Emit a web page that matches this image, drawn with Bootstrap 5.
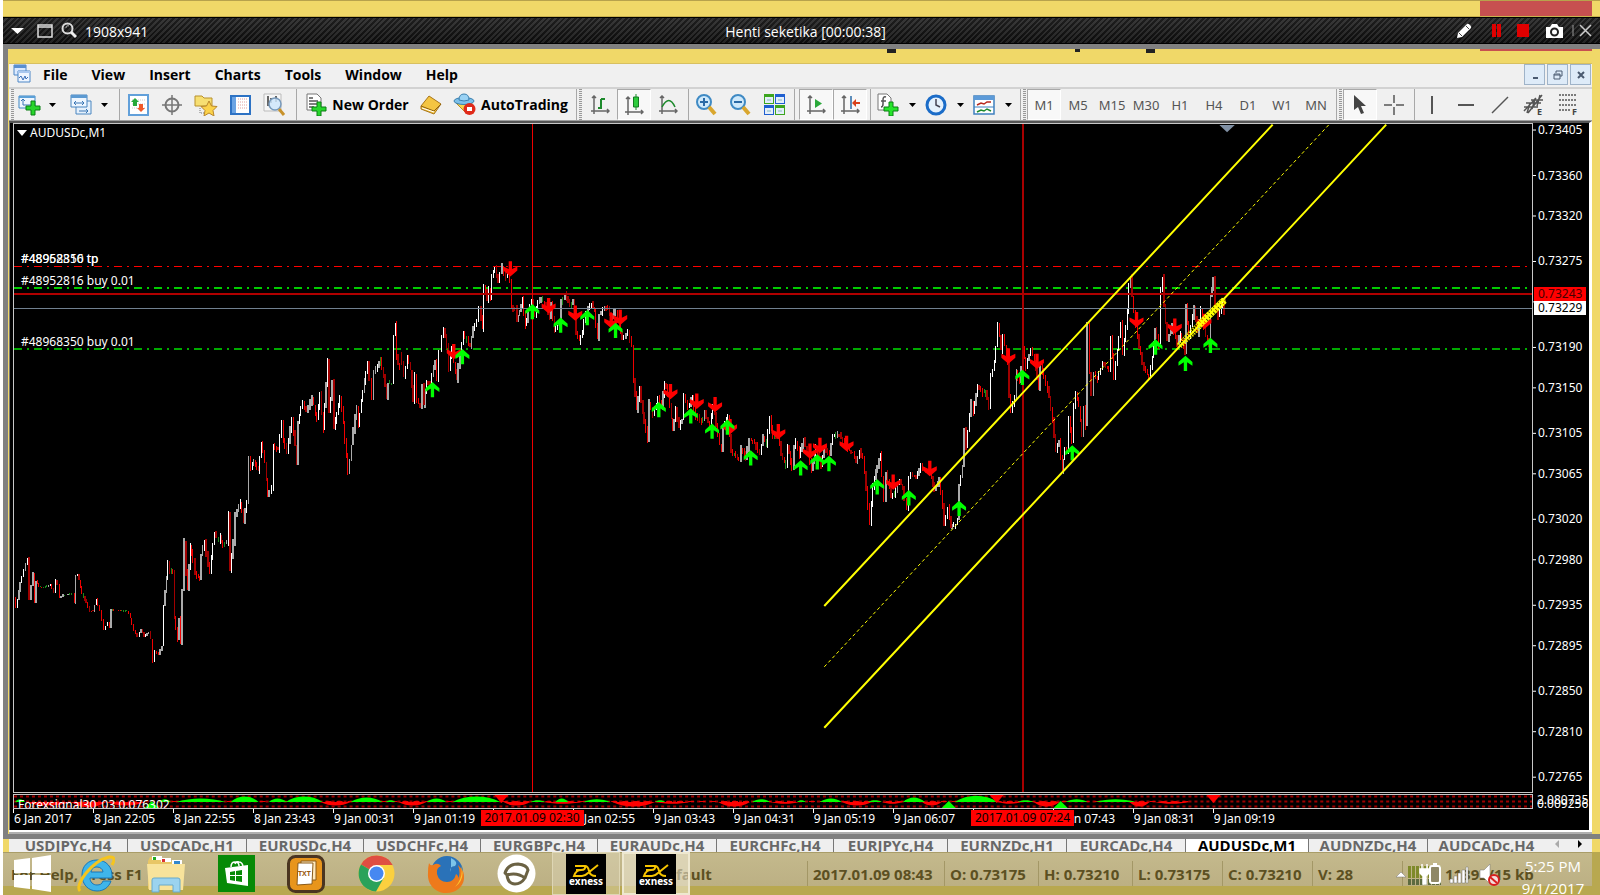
<!DOCTYPE html>
<html lang="en">
<head>
<meta charset="utf-8">
<meta name="viewport" content="width=device-width, initial-scale=1">
<title>AUDUSDc,M1</title>
<link href="https://cdn.jsdelivr.net/npm/bootstrap@5.3.0/dist/css/bootstrap.min.css" rel="stylesheet">
<style>
body{font-family:"Open Sans","Noto Sans",sans-serif;font-size:14px;line-height:18px;color:#000;background:#fff;padding-left:3px;overflow:hidden}
button{font-family:inherit}
.bare{border:0;background:none;padding:0;color:inherit;display:flex;align-items:center;justify-content:center;flex:none}
.desk-strip{height:17px;background:#f0d868;border-top:1px solid #b7a24c;border-bottom:1px solid #c9b24e;padding-right:8px}
.red-tab{width:112px;background:#c75050}
.rec{height:27px;color:#fff;background:repeating-linear-gradient(135deg,rgba(0,0,0,.4) 0 2px,rgba(70,70,70,.3) 2px 4px),linear-gradient(#333,#141414);border-top:1px solid #000;border-bottom:1px solid #000}
.rec span,.rec-title{padding-top:2px}
.rec-side{flex:1 1 0}
.frame{border:solid #808080;border-width:5px 0 5px 5px;background:#f0d868;min-height:0}
.cap{height:14px;padding-right:8px}
.cap i{height:4px;width:9px;background:#222;margin-right:179px}
.cap i+i{width:5px;height:3px;margin-right:66px}
.cap i+i+i{width:9px;height:4px;margin-right:325px}
.cap .red-tab{height:2px}
.app{margin:0 8px 0 1px;min-height:0;border-top:1px solid #d8c060}
.menu-row{height:25px;background:#f0f0f0;border-bottom:2px solid #d2d2d2;padding:0 1px 0 4px;font-weight:700}
.menu-row a{color:#000;text-decoration:none;padding:0 12px;line-height:22px}
.wbtn{width:21px;height:21px;border:1px solid #9fb3c8;background:#deebf8;color:#4a5a70;margin-left:2px}
.tools{height:32px;background:#f0f0f0;border-bottom:1px solid #a0a0a0}
.tools .bare{width:34px}
.tools .caret{width:14px}
.tools .w28{width:28px}.tools .w18{width:18px}.tools .w32{width:32px}
.tools .wide{width:113px;gap:5px;font-weight:700}
.tools .auto{width:125px}
.tools .on{background:#f8f8f8;border:1px solid #a8a8a8;border-right-color:#fff;border-bottom-color:#fff}
.tf{font-family:"Noto Sans",sans-serif;font-size:13px;color:#555!important}
.sep{flex:none;width:4px;border-right:1px solid #a8a8a8}
.sep.w9{width:9px;margin-right:1px}.sep.w6{width:6px}
.grip{flex:none;width:6px;border-left:2px solid #f0f0f0;border-right:1px solid #f0f0f0;background:repeating-linear-gradient(#999 0 1px,#eee 1px 2px)}
.caret svg{display:block}
.chart{background:#000;border:solid #bbb;border-width:0 3px 0 1px;border-left-color:#777;border-right-color:#fff;border-top:2px solid #555;padding:0 0 0 3px;min-height:0;font:12px/16px "Noto Sans",sans-serif;color:#fff}
.chart-end{height:4px;background:#b0b0b0;border-top:2px solid #fff}
.plot{border:1px solid #c8c8c8;min-width:0}
.axis{width:56px;flex:none}
.plot svg.fill,.axis svg,.sub svg{position:absolute;inset:0;width:100%;height:100%;display:block}
.note{position:absolute;left:7px;white-space:nowrap;transform:translateY(-50%)}
.sub{height:15px;border:solid #c8c8c8;border-width:1px;overflow:hidden}
.subrow{margin-top:1px}
.subrow .axis{font-size:12px;line-height:12px}
.times{height:21px}
.times span{flex:0 0 5.263%;white-space:nowrap;border-left:1px solid #fff;height:4px;padding-top:2px}
.stamp{position:absolute;top:1px;height:16px;width:103px;background:#f00;color:#000;text-align:center;line-height:16px;white-space:nowrap}
.tag{position:absolute;left:1px;width:52px;height:14px;line-height:14px;padding-left:4px}
.tabs{height:13px;background:#f0d868;padding:0 8px 0 6px;flex:none;font-size:15px;font-weight:700;overflow:hidden}
.tabs>div{background:#efefef;min-width:0}
.tabs a{flex:0 0 117px;text-align:center;color:#686868;text-decoration:none;line-height:12px;border-right:1px solid #777;height:13px;white-space:nowrap}
.tabs a.t120{flex-basis:119px}.tabs a.t114{flex-basis:114px}
.tabs a.on{background:#fff;color:#000;flex-basis:123px}
.task{height:43px;background:#b8a850;flex:none}
.status{height:34px;margin-right:8px;background:linear-gradient(#c4b98c,#bcb084);border-top:1px solid #a99d68;color:#5c5022;font-size:15px;font-weight:700;white-space:nowrap}
.status span{height:25px;margin-top:8px;line-height:26px;border-left:1px solid #a39766;padding-left:5px;flex:none}
.s94{width:94px}.s90{width:90px}
.apps{position:absolute;inset:0 auto 0 0}
.apps .bare{width:70px;height:43px}
.apps .st{width:58px}
.apps .win{border:1px solid #ded6b4;background:rgba(225,218,190,.4);width:68px;margin:0 1px}
.apps .act{background:rgba(240,235,215,.55);border:2px solid #eee8d0}
.tray{position:absolute;right:14px;top:0;bottom:0;color:#fff}
.clock{text-align:center;line-height:22px;padding-top:3px;width:66px;font-size:15px}
</style>
</head>
<body class="d-flex flex-column vh-100">
<div class="desk-strip d-flex justify-content-end flex-shrink-0"><div class="red-tab"></div></div>

<header class="rec d-flex align-items-center flex-shrink-0">
 <div class="rec-side d-flex align-items-center">
  <button class="bare ms-2" aria-label="Menu"><svg width="14" height="8"><path d="M0 1h13L6.500 7z" fill="#fff"/></svg></button>
  <button class="bare ms-2 ps-1" aria-label="Region"><svg width="16" height="14"><path d="M1 1h14v12H1zM1 3h14" fill="none" stroke="#ddd" stroke-width="1.500"/></svg></button>
  <button class="bare ms-2" aria-label="Zoom"><svg width="16" height="17"><circle cx="6.500" cy="6.500" r="5" fill="none" stroke="#ddd" stroke-width="2"/><path d="M5 6a2 2 0 0 1 3-2" stroke="#aaa" fill="none"/><path d="M10 10l5 5" stroke="#eee" stroke-width="3"/></svg></button>
  <span class="ps-2">1908x941</span>
 </div>
 <div class="rec-title ps-3">Henti seketika [00:00:38]</div>
 <div class="rec-side d-flex align-items-center justify-content-end pe-2">
  <button class="bare me-3" aria-label="Draw"><svg width="16" height="16"><path d="M1 15l1-5 9-9q1-1 3 1t1 3l-9 9z" fill="#fff"/><path d="M10 3l3 3M3 10l3 3" stroke="#444"/></svg></button>
  <button class="bare ms-1 me-3" aria-label="Pause"><svg width="9" height="13"><path d="M0 0h4v13H0zM5 0h4v13H5z" fill="#e00000"/></svg></button>
  <button class="bare me-3" aria-label="Stop"><svg width="12" height="13"><path d="M0 0h12v13H0z" fill="#e00000"/></svg></button>
  <button class="bare me-2" aria-label="Photo"><svg width="19" height="14"><path d="M1 3h4l2-3h5l2 3h4v11H1z" fill="#fff"/><circle cx="9.500" cy="8" r="3.500" fill="none" stroke="#222" stroke-width="2"/></svg></button>
  <svg width="3" height="11"><path d="M1 0v11" stroke="#999"/></svg>
  <button class="bare ms-1" aria-label="Close"><svg width="13" height="13"><path d="M1 1l11 11M12 1L1 12" stroke="#ccc" stroke-width="1.500"/></svg></button>
 </div>
</header>

<main class="frame d-flex flex-column flex-grow-1">
 <div class="cap d-flex justify-content-end flex-shrink-0"><i></i><i></i><i></i><div class="red-tab"></div></div>
 <div class="app d-flex flex-column flex-grow-1">
  <nav class="menu-row d-flex flex-shrink-0">
   <svg width="18" height="19"><path d="M1 1h12v10H1z" fill="#dceaff" stroke="#4d86c6"/><path d="M1 1h12v3H1z" fill="#5b8fd0"/><path d="M5 7h12v11H5z" fill="#eef5ff" stroke="#4d86c6"/><path d="M5 7h12v2H5z" fill="#a9c7ee"/><path d="M6 14l2-2 2 4 2-4 1 3 2-2" stroke="#3b6fb8" fill="none"/></svg>
   <a href="#">File</a><a href="#">View</a><a href="#">Insert</a><a href="#">Charts</a><a href="#">Tools</a><a href="#">Window</a><a href="#">Help</a>
   <div class="ms-auto d-flex">
    <button class="bare wbtn" aria-label="Minimize"><svg width="10" height="10"><path d="M3 8h5" stroke="#4a5a70" stroke-width="2"/></svg></button><button class="bare wbtn" aria-label="Restore"><svg width="10" height="10"><path d="M3 1h6v5H7M3 1v2M1 4h6v5H1zM1 5h6" stroke="#4a5a70" fill="none"/></svg></button><button class="bare wbtn" aria-label="Close chart"><svg width="10" height="10"><path d="M2 2l6 6M8 2L2 8" stroke="#4a5a70" stroke-width="2"/></svg></button>
   </div>
  </nav>
  <div class="tools d-flex flex-shrink-0" role="toolbar">
   <div class="grip"></div>
   <button class="bare w28" aria-label="New chart"><svg width="23" height="22"><path d="M1 2h16v12H1z" fill="#eef6ff" stroke="#3f87c4"/><path d="M1 2h16v2H1z" fill="#5ba0d8"/><path d="M5 5v6h8M3 7l2-2 2 2" stroke="#3a76b4" fill="none"/><path d="M13 7h4v5h5v4h-5v5h-4v-5H8v-4h5z" fill="#27d52b" stroke="#0b7f14"/></svg></button>
   <button class="bare caret w18" aria-label="New chart list"><svg width="7" height="4"><path d="M0 0h7L3.500 4z"/></svg></button>
   <div class="ms-1"></div>
   <button class="bare w32" aria-label="Profiles"><svg width="22" height="22"><path d="M6 7h15v13H6z" fill="#e6f1fc" stroke="#4b86c0"/><path d="M1 1h16v12H1z" fill="#eef6ff" stroke="#4b86c0"/><path d="M1 1h16v3H1z" fill="#5c9ad2"/><path d="M4 9h10M6 7L4 9l2 2M12 7l2 2-2 2M9 17h9M16 15l2 2-2 2" stroke="#3a76b4" fill="none"/></svg></button>
   <button class="bare caret" aria-label="Profile list"><svg width="7" height="4"><path d="M0 0h7L3.500 4z"/></svg></button>
   <div class="sep w9"></div>
   <button class="bare" aria-label="Market watch"><svg width="21" height="22"><path d="M1 1h19v20H1z" fill="#fff" stroke="#62a0da" stroke-width="2"/><path d="M4 6h14M4 10h14M4 14h14" stroke="#ccc" stroke-dasharray="1 1"/><path d="M7 4l4 4H9v4H5V8H3z" fill="#26a83a"/><path d="M13 18l4-4h-2v-4h-4v4H9z" fill="#f0592a"/></svg></button>
   <button class="bare" aria-label="Data window"><svg width="20" height="20"><circle cx="10" cy="10" r="6.500" fill="none" stroke="#777" stroke-width="2"/><path d="M10 0v20M0 10h20" stroke="#777" stroke-width="1.500"/></svg></button>
   <button class="bare" aria-label="Navigator"><svg width="24" height="22"><path d="M1 2h7l2 2h8v8H1z" fill="#f7df72" stroke="#b8912c"/><path d="M6 14v5h5" stroke="#777" fill="none" stroke-dasharray="1 1"/><path d="M15 7l2.500 5 5.500.5-4 4 1 5.500-5-3-5 3 1-5.500-4-4 5.500-.5z" fill="#fbd24a" stroke="#b8862a"/></svg></button>
   <button class="bare" aria-label="Terminal"><svg width="21" height="20"><path d="M1 1h19v18H1z" fill="#fff" stroke="#2d72c4" stroke-width="2"/><path d="M2 2h4v16H2z" fill="#6ba4e4"/><path d="M8 4h10M8 7h10M8 10h10M8 13h10" stroke="#e0a0a0" stroke-dasharray="1 1"/></svg></button>
   <button class="bare" aria-label="Strategy tester"><svg width="23" height="23"><path d="M1 1h17v17H1z" fill="#f6f6f6" stroke="#bbb"/><path d="M5 3v10M8 5v5M13 3v6" stroke="#666" stroke-width="2"/><circle cx="12" cy="11" r="6" fill="#cfe6fb" fill-opacity=".85" stroke="#79b" stroke-width="1.500"/><path d="M16 16l5 6" stroke="#c8922b" stroke-width="3"/></svg></button>
   <div class="sep w6"></div><div class="me-1"></div>
   <button class="bare wide"><svg width="21" height="23"><path d="M1 1h10l4 4v12H1z" fill="#fff" stroke="#777"/><path d="M3 5h4M3 8h9M3 11h9M3 14h5" stroke="#555" stroke-width="1.500"/><path d="M11 9h4v5h5v4h-5v5h-4v-5H6v-4h5z" fill="#27d52b" stroke="#0b7f14"/></svg>New Order</button>
   <button class="bare" aria-label="MetaEditor"><svg width="22" height="20"><path d="M1 11L9 1l12 8-7 10-13-5z" fill="#f4c542" stroke="#a87518"/><path d="M1 11l13 5 7-7" fill="none" stroke="#8f6212"/><path d="M2 13l12 4" stroke="#fff"/></svg></button>
   <button class="bare wide auto"><svg width="23" height="23"><path d="M3 10h16l-5 11z" fill="#f7d34d" stroke="#b88e25"/><ellipse cx="11" cy="8" rx="10" ry="3.500" fill="#7cc0ea" stroke="#3a7fae"/><path d="M6 7q0-6 5-6t5 6q-5 2-10 0z" fill="#9ad2f4" stroke="#3a7fae"/><circle cx="16.500" cy="16" r="6" fill="#e02a1a"/><path d="M14 14h5v4h-5z" fill="#fff"/></svg>AutoTrading</button>
   <div class="sep"></div><div class="grip"></div>
   <button class="bare" aria-label="Bar chart"><svg width="20" height="20"><path d="M4 1v18M1 16h18M2 3l2-2 2 2M17 14l2 2-2 2" stroke="#666" fill="none" stroke-width="1.500"/><path d="M11 4v10M11 4h4M8 13h3" stroke="#1d8a2c" stroke-width="2"/></svg></button>
   <button class="bare on" aria-label="Candlesticks"><svg width="20" height="22"><path d="M4 3v18M1 18h18M2 5l2-2 2 2M17 16l2 2-2 2" stroke="#666" fill="none" stroke-width="1.500"/><path d="M12 0v16" stroke="#1d8a2c"/><path d="M9.500 3h5v10h-5z" fill="#2ccc3c" stroke="#137a22"/></svg></button>
   <button class="bare" aria-label="Line chart"><svg width="20" height="20"><path d="M4 1v18M1 16h18M2 3l2-2 2 2M17 14l2 2-2 2" stroke="#666" fill="none" stroke-width="1.500"/><path d="M4 12q7-13 13 0" stroke="#1d8a2c" stroke-width="1.500" fill="none"/></svg></button>
   <div class="sep"></div>
   <button class="bare" aria-label="Zoom in"><svg width="22" height="22"><circle cx="9" cy="8" r="7" fill="#cfe9fb" stroke="#3f8ac4" stroke-width="2"/><path d="M9 4v8M5 8h8" stroke="#2a6aa6" stroke-width="2"/><path d="M14 13l6 7" stroke="#d9a62e" stroke-width="4"/></svg></button>
   <button class="bare" aria-label="Zoom out"><svg width="22" height="22"><circle cx="9" cy="8" r="7" fill="#cfe9fb" stroke="#3f8ac4" stroke-width="2"/><path d="M5 8h8" stroke="#2a6aa6" stroke-width="2"/><path d="M14 13l6 7" stroke="#d9a62e" stroke-width="4"/></svg></button>
   <button class="bare" aria-label="Tile windows"><svg width="21" height="21"><path d="M0 0h10v10H0zM11 11h10v10H11z" fill="#3da51e"/><path d="M11 0h10v10H11zM0 11h10v10H0z" fill="#1f5fd0"/><path d="M1 3h8v6H1zM12 3h8v6h-8zM1 14h8v6H1zM12 14h8v6h-8z" fill="#e4eefa"/><path d="M3 6h4M14 6h4M3 17h4M14 17h4" stroke="#8bb"/></svg></button>
   <div class="sep"></div><div class="pe-1"></div>
   <button class="bare on" aria-label="Auto scroll"><svg width="20" height="20"><path d="M4 1v18M1 16h18M2 3l2-2 2 2M17 14l2 2-2 2" stroke="#666" fill="none" stroke-width="1.500"/><path d="M9 4l7 4.500L9 13z" fill="#2aa83a"/></svg></button>
   <button class="bare on" aria-label="Chart shift"><svg width="20" height="20"><path d="M4 1v18M1 16h18M2 3l2-2 2 2M17 14l2 2-2 2" stroke="#666" fill="none" stroke-width="1.500"/><path d="M11 1v13" stroke="#2a6aa6" stroke-width="1.500"/><path d="M12 8l4-4v3h4v2h-4v3z" fill="#d8401a"/></svg></button>
   <div class="sep"></div>
   <button class="bare" aria-label="Indicators"><svg width="22" height="23"><path d="M1 1h9l4 4v12H1z" fill="#fff" stroke="#777"/><path d="M9 4q-3-1-3 3v4q0 3-2 3M4 8h5" stroke="#555" fill="none" stroke-width="1.500"/><path d="M12 9h4v5h5v4h-5v5h-4v-5H7v-4h5z" fill="#27e52b" stroke="#0b7f14"/></svg></button>
   <button class="bare caret" aria-label="Indicator list"><svg width="7" height="4"><path d="M0 0h7L3.500 4z"/></svg></button>
   <button class="bare" aria-label="Periods"><svg width="22" height="22"><circle cx="11" cy="11" r="9" fill="#e4f1fd" stroke="#1b6cc8" stroke-width="3"/><path d="M11 5v6l4 2" stroke="#445" fill="none" stroke-width="1.500"/></svg></button>
   <button class="bare caret" aria-label="Period list"><svg width="7" height="4"><path d="M0 0h7L3.500 4z"/></svg></button>
   <button class="bare" aria-label="Templates"><svg width="22" height="20"><path d="M1 1h20v18H1z" fill="#fff" stroke="#3f80bf" stroke-width="1.500"/><path d="M1 1h20v4H1z" fill="#5c9ad8"/><path d="M1 12h20" stroke="#3f80bf"/><path d="M4 10l4-2 3 1 3-2 4 0" stroke="#b8291c" stroke-width="1.500" fill="none"/><path d="M4 17l4-2 3 1 3-2 4 2" stroke="#1d8a2c" stroke-width="1.500" fill="none"/></svg></button>
   <button class="bare caret" aria-label="Template list"><svg width="7" height="4"><path d="M0 0h7L3.500 4z"/></svg></button>
   <div class="sep w6"></div><div class="grip"></div>
   <button class="bare tf on">M1</button><button class="bare tf">M5</button><button class="bare tf">M15</button><button class="bare tf">M30</button><button class="bare tf">H1</button><button class="bare tf">H4</button><button class="bare tf">D1</button><button class="bare tf">W1</button><button class="bare tf">MN</button>
   <div class="sep"></div><div class="grip"></div>
   <button class="bare on" aria-label="Cursor"><svg width="14" height="20"><path d="M1 0v15l4-3 3 7 3-1-3-7h5z" fill="#444"/></svg></button>
   <button class="bare" aria-label="Crosshair"><svg width="20" height="20"><path d="M10 0v8M10 12v8M0 10h8M12 10h8" stroke="#555" stroke-width="1.500"/></svg></button>
   <div class="sep"></div>
   <button class="bare" aria-label="Vertical line"><svg width="20" height="18"><path d="M10 0v18" stroke="#555" stroke-width="2"/></svg></button>
   <button class="bare" aria-label="Horizontal line"><svg width="18" height="18"><path d="M1 9h16" stroke="#555" stroke-width="2"/></svg></button>
   <button class="bare" aria-label="Trendline"><svg width="18" height="18"><path d="M1 17L17 1" stroke="#555" stroke-width="1.500"/></svg></button>
   <button class="bare" aria-label="Equidistant channel"><svg width="22" height="24"><path d="M1 18L13 5M5 20L19 2M3 10l15 0M1 14h14M8 7h12M7 10l-3 10M12 6l-3 10M17 2l-3 11" stroke="#555" stroke-width="1.500"/><text x="14" y="22" font-size="9" font-weight="700" fill="#444">E</text></svg></button>
   <button class="bare" aria-label="Fibonacci"><svg width="20" height="24"><path d="M1 2h17M1 7h17M1 12h17M1 17h12" stroke="#555" stroke-width="1.500" stroke-dasharray="2 1"/><text x="14" y="22" font-size="9" font-weight="700" fill="#444">F</text></svg></button>
  </div>

  <section class="chart d-flex flex-column flex-grow-1">
   <div class="d-flex flex-grow-1">
    <div class="plot position-relative flex-grow-1">
     <svg class="fill" viewBox="39 -348 4560 2007" preserveAspectRatio="none" id="plot"></svg>
     <span class="note" style="top:1.300%"><svg width="10" height="6" style="margin-left:-4px"><path d="M0 0h10L5 6z" fill="#fff"/></svg> AUDUSDc,M1</span>
     <span class="note" style="top:20.200%">#48968350 tp</span><span class="note" style="top:20.200%">#48952816 tp</span>
     <span class="note" style="top:23.500%">#48952816 buy 0.01</span>
     <span class="note" style="top:32.700%">#48968350 buy 0.01</span>
    </div>
    <div class="axis position-relative"><svg id="prices"></svg>
     <div class="tag" style="top:24.500%;background:#f00;color:#400">0.73243</div>
     <div class="tag" style="top:26.600%;background:#fff;color:#000">0.73229</div>
    </div>
   </div>
   <div class="d-flex subrow">
    <div class="sub position-relative flex-grow-1"><svg viewBox="13 0 1520 13" preserveAspectRatio="none" id="osc"></svg><span class="position-absolute start-0 ps-1 text-nowrap" style="top:2px">Forexsignal30_03 0.076302</span></div>
    <div class="axis position-relative text-nowrap"><span class="position-absolute top-0 start-0 ps-1">2.080735</span><span class="position-absolute start-0 ps-1 pt-1">0.009256</span></div>
   </div>
   <div class="d-flex times position-relative me-5 pe-2"><span>6 Jan 2017</span><span>8 Jan 22:05</span><span>8 Jan 22:55</span><span>8 Jan 23:43</span><span>9 Jan 00:31</span><span>9 Jan 01:19</span><span></span><span>9 Jan 02:55</span><span>9 Jan 03:43</span><span>9 Jan 04:31</span><span>9 Jan 05:19</span><span>9 Jan 06:07</span><span></span><span>9 Jan 07:43</span><span>9 Jan 08:31</span><span>9 Jan 09:19</span>
    <b class="stamp fw-normal" style="left:30.600%">2017.01.09 02:30</b><b class="stamp fw-normal" style="left:62.700%">2017.01.09 07:24</b>
   </div>
  </section>
  <div class="chart-end flex-shrink-0"></div>
 </div>
</main>

<nav class="tabs"><div class="d-flex overflow-hidden">
 <a href="#" class="t120">USDJPYc,H4</a><a href="#" class="t120">USDCADc,H1</a><a href="#">EURUSDc,H4</a><a href="#">USDCHFc,H4</a><a href="#">EURGBPc,H4</a><a href="#" class="t120">EURAUDc,H4</a><a href="#">EURCHFc,H4</a><a href="#" class="t114">EURJPYc,H4</a><a href="#" class="t120">EURNZDc,H1</a><a href="#" class="t120">EURCADc,H4</a><a href="#" class="on">AUDUSDc,M1</a><a href="#" class="t120">AUDNZDc,H4</a><a href="#" class="border-0">AUDCADc,H4</a>
 <svg class="ms-auto me-2" width="30" height="12"><path d="M5 1L1 5l4 4z" fill="#aaa"/><path d="M24 1l4 4-4 4z"/></svg>
</div></nav>

<footer class="task position-relative">
 <div class="status d-flex ps-2">
  <span class="border-0 ps-0 flex-grow-1">For Help, Press F1</span><span class="border-0 ps-0" style="width:151px">Default</span><span style="width:137px">2017.01.09 08:43</span><span class="s94">O: 0.73175</span><span class="s94">H: 0.73210</span><span class="s90">L: 0.73175</span><span class="s90">C: 0.73210</span><span class="s90">V: 28</span>
  <span style="width:190px"><svg width="33" height="20"><path d="M0 6h33" stroke="#7f8a2a" stroke-width="12" stroke-dasharray="3 1"/><path d="M0 16h33" stroke="#5d6b40" stroke-width="6" stroke-dasharray="3 1"/></svg> 11392/15 kb</span>
 </div>
 <div class="apps d-flex">
  <button class="bare st" aria-label="Start"><svg width="37" height="37"><path d="M0 5l16-2v15H0zM18 3l19-3v18H18zM0 20h16v14L0 32zM18 20h19v17l-19-3z" fill="#fff"/></svg></button>
  <button class="bare" aria-label="Internet Explorer"><svg width="38" height="38"><path d="M20 5C11 5 5 11 5 20s6 16 15 16c7 0 12-4 14-10h-8c-1 3-3 4-6 4-4 0-7-3-7-7h22C36 12 29 5 20 5zm-6 12c1-4 3-5 6-5s6 2 6 5z" fill="#3fb5ea" stroke="#1877b8"/><path d="M3 36C-3 30 15 6 32 2q8-1 3 8" fill="none" stroke="#f5c51e" stroke-width="3"/></svg></button>
  <button class="bare" aria-label="File Explorer"><svg width="40" height="38"><path d="M4 2h12l2 4h18v28H2V6z" fill="#e8c665"/><path d="M6 1h10v4H6zM15 3h10v4H15zM26 5h10v4H26z" fill="#fff"/><path d="M7 2h3v3H7z" fill="#2a2"/><path d="M16 4h3v3h-3z" fill="#d33"/><path d="M28 6h6v3h-6z" fill="#38c"/><path d="M1 9h38l-2 26H3z" fill="#f8e39b"/><path d="M6 37V25q0-2 2-2h24q2 0 2 2v12h-7v-7H13v7z" fill="#9bd3ef" stroke="#69aacb"/></svg></button>
  <button class="bare" aria-label="Store"><svg width="37" height="37"><path d="M0 0h37v37H0z" fill="#078a07"/><path d="M7 13l23-3v21L9 28z" fill="#fff"/><path d="M13 12q0-5 4-5t4 4M17 9q1-3 4-2 3 0 4 4" stroke="#fff" fill="none" stroke-width="1.500"/><path d="M12 17l5-1v4h-5zM18 16l6-1v5h-6zM12 21h5v5l-5-1zM18 21h6v6l-6-1z" fill="#078a07"/></svg></button>
  <button class="bare" aria-label="Text tool"><svg width="38" height="38"><rect x="1.500" y="1.500" width="35" height="35" rx="7" fill="#e8951c" stroke="#4a3520" stroke-width="3"/><path d="M14 6h15v19H14z" fill="#ffe9bd" stroke="#8a5a18"/><path d="M11 8h15l-1 21-15 1z" fill="#fff" stroke="#8a5a18"/><text x="11" y="21" font-size="7" font-weight="700" fill="#9a5a10">TXT</text></svg></button>
  <button class="bare" aria-label="Chrome"><svg width="37" height="37"><circle cx="18.500" cy="18.500" r="18" fill="#fbd03f"/><path d="M18.500 18.500L3 9.500A18 18 0 0 1 34.500 10z" fill="#df4e42"/><path d="M18.500 18.500L3 9.500A18 18 0 0 0 18 36.500l8-14z" fill="#2aa25a"/><path d="M18.500 10H34.500L26 22" fill="#fbd03f"/><path d="M18 10h16.500L30 4z" fill="#df4e42"/><circle cx="18.500" cy="18.500" r="8.500" fill="#fff"/><circle cx="18.500" cy="18.500" r="7" fill="#4688f1"/></svg></button>
  <button class="bare" aria-label="Firefox"><svg width="38" height="38"><circle cx="20" cy="17" r="16" fill="#2a72b8"/><path d="M24 3q8 4 4 8-6 0-4 6" fill="#7cc4ea"/><path d="M2 8q1 3 4 2 5-3 8 1-5 2-4 8 2 8 10 8 7 0 9-8 3 2 2 5 3-6 0-14 7 6 6 14c-1 8-8 14-18 14S0 30 1 18q0-6 1-10z" fill="#ee7a1b"/><path d="M34 10q5 14-6 22 9-10 6-22z" fill="#fdc42e"/></svg></button>
  <button class="bare" aria-label="Acorn"><svg width="39" height="39"><circle cx="19.500" cy="19.500" r="19" fill="#fff"/><path d="M8 19q3-9 13-9 9 1 10 6l-3 8q-8-6-18-3zM10 21q1 9 8 9 6 0 10-6" fill="none" stroke="#6b6244" stroke-width="3" stroke-linejoin="round"/></svg></button>
  <button class="bare win" aria-label="Exness terminal 1"><svg width="40" height="40"><path d="M0 0h40v40H0z"/><path d="M9 12h10q1 4-4 4h-5 5q-5 0-7 6h8q3 0 6-3l10-8M19 12q3 0 4 5t7 5" fill="none" stroke="#f6c400" stroke-width="2"/><text x="20" y="31" font-size="10" font-weight="700" text-anchor="middle" fill="#fff">exness</text></svg></button>
  <button class="bare win act" aria-label="Exness terminal 2"><svg width="40" height="40"><path d="M0 0h40v40H0z"/><path d="M9 12h10q1 4-4 4h-5 5q-5 0-7 6h8q3 0 6-3l10-8M19 12q3 0 4 5t7 5" fill="none" stroke="#f6c400" stroke-width="2"/><text x="20" y="31" font-size="10" font-weight="700" text-anchor="middle" fill="#fff">exness</text></svg></button>
 </div>
 <div class="tray d-flex align-items-center">
  <svg width="108" height="26"><path d="M0 16l5-5 5 5z" fill="#fff" stroke="#777" stroke-width=".5"/><path d="M26 3v5M31 3v5M24 8h9v4l-3 3v8h-3v-8l-3-3z" stroke="#fff" fill="#fff" stroke-width="1.500"/><rect x="34" y="5" width="10" height="17" rx="2" fill="#8f8867" stroke="#fff" stroke-width="2"/><path d="M37 2h4v3h-4z" fill="#fff"/><path d="M54 18h3v4h-3zM58 15h3v7h-3zM62 12h3v10h-3zM66 9h3v13h-3zM70 6h2v16h-2z" fill="#fff" stroke="#777" stroke-width=".5"/><path d="M84 9h4l6-6v20l-6-6h-4z" fill="#fff" stroke="#777" stroke-width=".5"/><circle cx="98" cy="19" r="5" fill="#f4dcdc" stroke="#d81e1e" stroke-width="2"/><path d="M94 16l7 6" stroke="#d81e1e" stroke-width="2"/></svg>
  <div class="clock ms-3 align-self-start">5:25 PM<br>9/1/2017</div>
 </div>
</footer>

<script src="https://cdn.jsdelivr.net/npm/bootstrap@5.3.0/dist/js/bootstrap.bundle.min.js"></script>
<script>
// Swing points of the minute series: x offset, then x,y pairs in plot units.
const swings=[
[0,"42,1075 47,1105 60,1030 82,955 88,1080 98,1000 102,1090 107,1025 115,1042 130,1045 150,1035 160,1060 165,1022 172,1035 178,1075 190,1068 218,1063 222,1090 226,1010 232,1005 237,1022 245,1065 258,1090 268,1115 278,1115 288,1080 300,1115 312,1170 322,1150 327,1165 332,1110 340,1112 380,1115 390,1135 400,1175 412,1190 422,1170 432,1190 445,1178 452,1200 458,1268 465,1235 475,1245 485,1220 488,1100 495,1060 503,965 508,995 518,1000 523,1130 532,1200 535,1140 540,1205 547,1050 552,905 557,1000 562,1045 570,920 578,960 585,1005 598,1020 603,945 612,910 618,945 630,995 638,915 643,880 655,905 660,890 668,915 680,910 685,820 688,990 700,910 705,830 720,790 730,845 740,790 745,655 752,690 760,665 775,695 783,610 795,670 803,770 815,745 820,620 835,630 845,550 850,600 860,635 875,540 885,620 890,665 893,550 903,500 908,490 920,515 937,475 950,540 960,465 970,570 983,365 988,520 997,430 1002,565 1020,470 1030,550 1043,700 1050,660 1065,530 1070,500 1075,560 1085,480 1103,370 1115,470 1122,400 1142,360 1160,470 1165,430 1175,430 1182,290 1187,255 1190,350 1198,390"],
[1200,"0,340 12,410 22,350 32,390 40,485 45,405 50,480 62,505 68,440 72,495 80,425 90,440 97,400 105,365 112,420 118,330 125,290 132,265 140,320 147,390 155,320 162,370 170,420 180,340 190,280 200,300 210,320 220,270 232,240 238,200 248,265 252,140 262,180 265,150 272,180 275,110 285,85 295,120 307,78 318,115 325,95 330,120 334,205 345,205 352,240 360,215 368,180 377,260 385,215 395,180 405,230 415,190 425,175 435,200 450,230 455,195 465,275 478,245 485,185 497,165 510,200 520,185 530,280 540,305 548,280 560,215 575,195 585,210 593,295 600,225 615,205 625,210 635,240 648,210 660,260 668,300 685,280 695,320 702,420 712,510 720,450 730,520 743,598 748,490 760,530 775,470 785,500 795,430 805,460 812,500 820,570 828,510 838,565 848,540 853,470 865,500 878,475 890,530 905,545 915,520 930,560 940,495 955,590 965,635 970,560 985,530 995,640 1005,645 1018,660 1025,625 1038,655 1050,600 1065,610 1080,640 1090,590 1100,615 1110,535 1120,590 1135,590 1145,640 1160,680 1165,620 1178,690 1185,620 1190,605 1200,650 1213,600 1225,640 1237,690 1250,620 1265,680 1275,625 1290,640 1300,590"],
[2460,"40,590 55,585 70,600 85,630 100,640 110,665 120,635 130,660 140,750 152,850 160,740 170,700 183,645 195,780 200,700 215,770 225,765 240,720 250,750 262,805 268,720 275,705 290,715 305,680 320,695 332,700 345,755 360,720 370,800 375,850 385,805 395,865 408,855 415,840 420,740 430,680 436,570 442,620 450,530 457,490 462,520 475,440 490,460 500,460 508,500 515,410 525,370 530,320 535,255 545,330 552,290 565,370 570,470 576,515 588,470 592,400 600,430 610,330 620,385 637,325 650,385 658,450 665,375 680,430 690,470 700,540 710,630 720,605 730,695 738,625 745,635 750,540 758,600 765,500 770,465 780,500 788,590 795,500 800,560 805,255 812,400 818,460 825,400 835,420 850,370 870,390 875,290 885,410 895,330 905,250 912,340 925,220 930,140 935,115 940,170 950,260 960,320 975,390 990,415 1000,350 1008,270 1018,320 1025,150 1030,115 1035,200 1045,300 1060,260 1075,310 1085,280 1098,335 1102,200 1110,290 1125,200 1135,280 1145,210 1160,290 1170,310 1175,170 1183,120 1190,200 1198,230 1212,180 1215,220"]];
let seed=7;const rnd=()=>(seed=(seed*16807)%2147483647)/2147483647;
const hline=(y,c,w,d)=>`<path d="M39 ${y}H4599" stroke="${c}" stroke-width="${w}" ${d?'stroke-dasharray="24 15 6 15"':''}/>`;
let s='<g fill="none" shape-rendering="crispEdges">'+hline(79,'#f00',3,1)+hline(145,'#0c0',6,1)+hline(329,'#0a0',6,1);
const col={w:'',g:'',r:'',d:'',n:''};
for(const [ox,str] of swings){
 const p=str.split(' ').map(q=>q.split(',').map(Number));
 for(let i=0;i<p.length-1;i++){
  const [x1,y1]=p[i],[x2,y2]=p[i+1],n=Math.max(1,Math.round((x2-x1)/5));
  const wick=(ox===0&&x1<480)?3:12;
  for(let k=0;k<n;k++){
   const x=ox+x1+(x2-x1)*(k+.5)/n;
   let a=y1+(y2-y1)*k/n,b=y1+(y2-y1)*(k+1)/n;
   const up=b<a,flat=Math.abs(b-a)<3,lo=Math.max(a,b)+rnd()*wick,hi=Math.min(a,b)-rnd()*wick;
   const key=flat&&rnd()<.5||(Math.abs(b-a)<15&&rnd()<.06)?'n':up?(rnd()<.6?'w':'g'):(rnd()<.6?'r':'d');
   col[key]+=`M${x.toFixed(0)} ${hi.toFixed(0)}V${lo.toFixed(0)}`;
  }
 }
}
s+=`<path d="${col.n}" stroke="#1a8a1a" stroke-width="3"/><path d="${col.g}" stroke="#aaa" stroke-width="5"/><path d="${col.d}" stroke="#a00000" stroke-width="5"/><path d="${col.w}" stroke="#fff" stroke-width="3"/><path d="${col.r}" stroke="#f00000" stroke-width="3"/>`;
s+=hline(162,'#b00000',6)+hline(205,'#708090',3)+'<path d="M1597-348V1659" stroke="#e00" stroke-width="3"/><path d="M3069-348V1659" stroke="#a80000" stroke-width="6"/></g>';
const red=[[1530,64],[1360,313],[1645,175],[1725,197],[1833,220],[1860,210],[2011,433],[2090,462],[2145,472],[2190,538],[2335,553],[2430,612],[2460,595],[2540,589],[2680,705],[2790,664],[3026,326],[3112,342],[3411,217],[3526,236],[3615,222]];
const green=[[1296,427],[1386,328],[1596,193],[1681,233],[1761,211],[1846,249],[1976,487],[2072,506],[2136,552],[2182,540],[2252,632],[2402,662],[2452,644],[2487,649],[2632,719],[2727,752],[2878,784],[3068,390],[3218,617],[3468,299],[3558,348],[3633,294]];
for(const [x,y] of red)s+=`<path d="M${x-5} ${y}h10v24l16-8v12l-21 18-21-18v-12l16 8z" fill="#f00"/>`;
for(const [x,y] of green)s+=`<path d="M${x-5} ${y+46}h10V${y+20}l16 10v-11L${x} ${y}l-21 19v11l16-10z" fill="#0f0"/>`;
s+='<g fill="none" stroke="#ff0"><path d="M2473 1100L3820-346M2473 1466L4161-346" stroke-width="6"/><path d="M2473 1283L3989-346" stroke-width="3" stroke-dasharray="10 8"/><path d="M3540 318L3600 258" stroke-width="20" stroke-dasharray="3 5"/><path d="M3598 256L3645 210L3675 182" stroke-width="20" stroke-dasharray="8 2"/><path d="M3536 310q60-64 130-134q18-2 8 20q-60 60-128 124q-14 4-10-10z" stroke-width="3" stroke-dasharray="4 2"/></g><path d="M3660-345h46l-23 22z" fill="#8090a4"/>';
document.getElementById('plot').innerHTML=s;

// Price scale, one label for each grid price.
let t='';for(const p of [73405,73360,73320,73275,73235,73190,73150,73105,73065,73020,72980,72935,72895,72850,72810,72765]){
 const y=(7+(73405-p)*1.0097)/669*100;
 t+=`<svg y="${y.toFixed(2)}%" overflow="visible"><path d="M0 0h3" stroke="#fff"/>${p===73235?'':`<text x="5" y="4" fill="#fff" font-size="12">0.${p}</text>`}</svg>`;
}
document.getElementById('prices').innerHTML=t;

// Oscillator: left, right, height of each lobe; positive is green.
const lobes=[[14,24,3],[158,170,3],[175,225,4],[230,258,6],[268,286,4],[285,322,6],[350,382,5],[385,395,2],[426,446,4],[452,500,6],[530,545,2],[555,568,4],[583,610,3],[655,665,2],[752,770,3],[797,806,2],[820,842,4],[868,882,2],[903,925,5],[955,998,7],[1018,1034,2],[1066,1088,3],[1096,1136,3],[24,70,-4],[70,105,-6],[105,145,-4],[320,350,-4],[398,426,-4],[503,530,-4],[543,582,-2],[612,655,-5],[655,690,-2],[718,750,-5],[770,800,-2],[842,872,-4],[882,903,-2],[922,942,-4],[998,1022,-2],[1034,1060,-5],[1130,1150,-5],[1155,1190,-2]];
let o='<g stroke="#a00000" stroke-width="2" stroke-dasharray="3 3"><path d="M13 1.500H1533M13 6.500H1533M13 11.500H1533"/></g><path d="M160 6.500H1190" stroke="#e00" stroke-width="1" stroke-dasharray="6 5"/>';
for(const [a,b,h] of lobes)o+=`<path d="M${a} 7C${a+(b-a)*.3} ${7-h*1.200} ${b-(b-a)*.3} ${7-h*1.200} ${b} 7z" fill="${h>0?'#0f0':'#f00'}"/>`;
for(const x of [151,949,1061])o+=`<path d="M${x-7} 13h14l-7-7z" fill="#0f0"/>`;
for(const x of [501,997,1214])o+=`<path d="M${x-7} 0h14l-7 8z" fill="#f00"/>`;
document.getElementById('osc').innerHTML=o;
</script>
</body>
</html>
